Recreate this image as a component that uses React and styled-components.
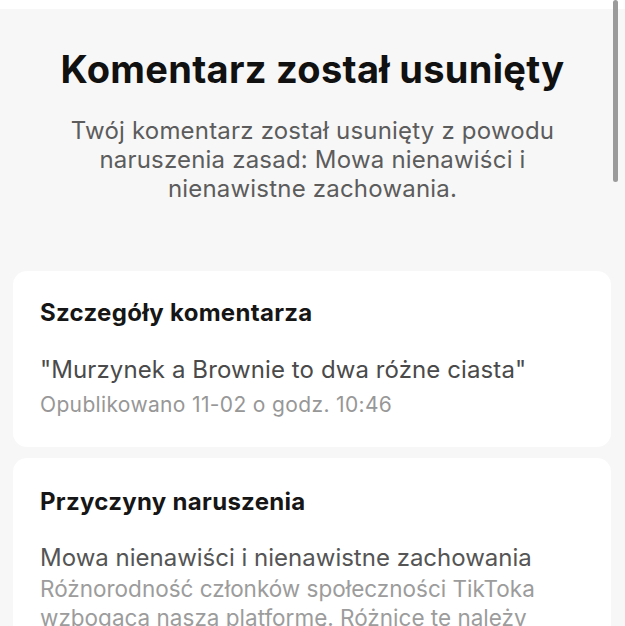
import React from "react";
import styled, { createGlobalStyle } from "styled-components";

const GlobalStyle = createGlobalStyle`
  html, body {
    margin: 0;
    padding: 0;
    background: #f7f7f7;
    font-family: Inter, "Noto Sans", sans-serif;
    overflow: hidden;
  }
`;

const Screen = styled.div`
  position: relative;
  width: 625px;
  height: 626px;
  overflow: hidden;
  background: #f7f7f7;
`;

const TopStrip = styled.div`
  height: 9px;
  background: #ffffff;
`;

const ScrollThumb = styled.div`
  position: absolute;
  top: 0;
  right: 7px;
  width: 5px;
  height: 182px;
  border-radius: 3px;
  background: #9b9b9b;
`;

const Header = styled.header`
  display: flex;
  flex-direction: column;
  align-items: center;
  padding: 38px 20px 0;
`;

const Title = styled.h1`
  margin: 0;
  font-size: 38px;
  line-height: 44px;
  font-weight: 700;
  color: #111;
  letter-spacing: 0.3px;
  white-space: nowrap;
`;

const Lead = styled.p`
  margin: 25px 0 0;
  width: 500px;
  text-align: center;
  font-size: 24px;
  line-height: 29px;
  letter-spacing: 0.2px;
  color: #5c5c5c;
`;

const Cards = styled.div`
  display: flex;
  flex-direction: column;
  gap: 11px;
  padding: 68px 14px 0 13px;
`;

const Card = styled.section`
  background: #fff;
  border-radius: 14px;
  padding: ${p => p.$top}px 27px 26px;
`;

const CardTitle = styled.h2`
  margin: 0 0 ${p => p.$gap}px;
  font-size: 24px;
  line-height: 32px;
  font-weight: 700;
  letter-spacing: 0.3px;
  color: #161616;
`;

const Line = styled.p`
  margin: ${p => p.$mt || 0}px 0 0;
  font-size: ${p => p.$size}px;
  line-height: ${p => p.$lh}px;
  letter-spacing: ${p => p.$ls || 0}px;
  color: ${p => p.$color};
`;

export default function App() {
  return (
    <Screen>
      <GlobalStyle />
      <TopStrip />
      <ScrollThumb />
      <Header>
        <Title>Komentarz został usunięty</Title>
        <Lead>
          Twój komentarz został usunięty z powodu naruszenia zasad: Mowa
          nienawiści i nienawistne zachowania.
        </Lead>
      </Header>
      <Cards>
        <Card $top={26}>
          <CardTitle $gap={24}>Szczegóły komentarza</CardTitle>
          <Line $size={24} $lh={34} $ls={0.1} $color="#4a4a4a">
            "Murzynek a Brownie to dwa różne ciasta"
          </Line>
          <Line $size={21} $lh={32} $ls={0.35} $mt={2} $color="#979797">
            Opublikowano 11-02 o godz. 10:46
          </Line>
        </Card>
        <Card $top={28}>
          <CardTitle $gap={23}>Przyczyny naruszenia</CardTitle>
          <Line $size={24} $lh={33} $color="#555">
            Mowa nienawiści i nienawistne zachowania
          </Line>
          <Line $size={22.5} $lh={29} $color="#9c9c9c">
            Różnorodność członków społeczności TikToka wzbogaca naszą
            platformę. Różnice te należy szanować i doceniać.
          </Line>
        </Card>
      </Cards>
    </Screen>
  );
}
